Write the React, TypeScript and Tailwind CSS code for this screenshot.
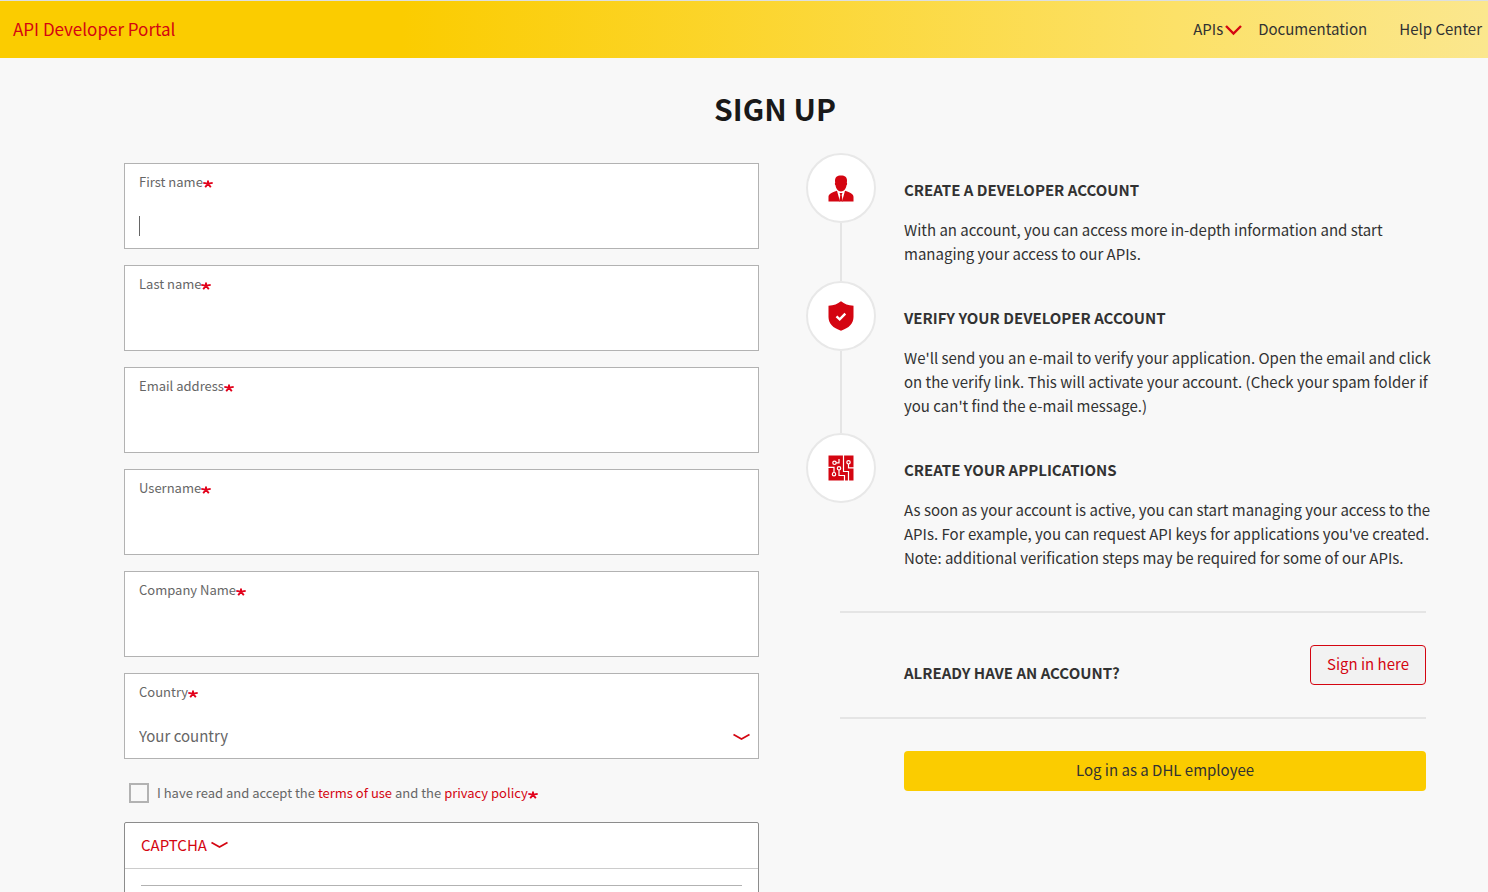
import { useState, ReactNode } from 'react'

interface Field {
  id: string
  label: string
  type?: string
}

const fields: Field[] = [
  { id: 'firstName', label: 'First name' },
  { id: 'lastName', label: 'Last name' },
  { id: 'email', label: 'Email address', type: 'email' },
  { id: 'username', label: 'Username' },
  { id: 'company', label: 'Company Name' },
]

function Required() {
  return (
    <svg className="inline-block w-2.5 h-2 align-[-1px]" viewBox="0 0 10 8" aria-hidden="true">
      <path d="M5 3.6V.5M5 3.6L.3 2.9M5 3.6L9.7 2.9M5 3.6L2.2 7.3M5 3.6L7.8 7.3" stroke="#e2001a" strokeWidth="1.9" fill="none" />
    </svg>
  )
}

function Chevron({ className = '' }: { className?: string }) {
  return (
    <svg className={`w-[17px] h-2 ${className}`} viewBox="0 0 17 8" aria-hidden="true">
      <path d="M.5 1.5L8.5 6L16.5 1.5" stroke="#d40511" strokeWidth="1.7" fill="none" />
    </svg>
  )
}

function PersonIcon() {
  return (
    <svg className="w-[26px] h-[27px]" viewBox="0 0 26 27" aria-hidden="true">
      <g fill="#d40511">
        <path d="M13 .5c4 0 6 1.700 6 5.200 0 .8-.1 1.500-.2 2 .5.3.5 2-.3 2.600-.5 3.400-2.700 6.200-5.500 6.200s-5-2.800-5.500-6.200c-.8-.6-.8-2.300-.3-2.600-.1-.5-.2-1.200-.2-2C7 2.200 9 .5 13 .5z" />
        <path d="M9 15.800L12 26.500H.5v-4.500c0-2.500 2-3.900 8.500-6.200zM17 15.800L14 26.500h11.500v-4.500c0-2.500-2-3.900-8.500-6.200z" />
        <path d="M11.500 18h3l-.8 1.900 1 6.600h-3.400l1-6.600z" />
      </g>
    </svg>
  )
}

function ShieldIcon() {
  return (
    <svg className="w-[26px] h-[30px]" viewBox="0 0 26 30" aria-hidden="true">
      <path d="M13 .3C16.500 3.200 20 4.300 25.500 4.700V16c0 6.500-4.500 11-12.500 13.700C5 27 .5 22.500.5 16V4.700C6 4.300 9.500 3.200 13 .3z" fill="#d40511" />
      <path d="M8.500 15.300l3.200 3 5.600-5.600" stroke="#fff" strokeWidth="2.400" fill="none" />
    </svg>
  )
}

function CircuitIcon() {
  return (
    <svg className="w-[26px] h-[26px]" viewBox="0 0 26 26" aria-hidden="true">
      <path d="M.5.500h25v25H.5z" fill="#d40511" />
      <g stroke="#fff" strokeWidth="1.200" fill="none">
        <circle cx="6.500" cy="7.800" r="1.700" />
        <circle cx="11" cy="13.300" r="1.700" />
        <circle cx="6" cy="19.200" r="1.700" />
        <circle cx="20.500" cy="7.300" r="1.700" />
        <path d="M8.200 7.800h2.800V4M15.500 0v16.500h5V26M20.500 9v3.800H26M0 12.300h6v5.200M11 15v5.500h5.500V26" />
      </g>
    </svg>
  )
}

interface StepProps {
  icon: ReactNode
  title: string
  last?: boolean
  children: ReactNode
}

function Step({ icon, title, last, children }: StepProps) {
  return (
    <li className="flex gap-7">
      <div className="flex flex-col items-center shrink-0">
        <div className="flex items-center justify-center size-[70px] rounded-full border-2 border-[#e8e8e8] bg-white">
          {icon}
        </div>
        {!last && <div className="w-0.5 flex-1 bg-[#e5e5e5]" />}
      </div>
      <div className="pt-[25px] pb-[15px] flex-1 -mr-2">
        <h2 className="font-bold uppercase">{title}</h2>
        <p className="mt-4">{children}</p>
      </div>
    </li>
  )
}

export default function App() {
  const [values, setValues] = useState<Record<string, string>>({})
  const [accepted, setAccepted] = useState(false)

  return (
    <div className="h-screen overflow-y-auto [scrollbar-width:none] bg-[#f8f8f8] font-['Noto_Sans_CJK_SC','Noto_Sans',sans-serif] text-[15px] leading-6 text-[#323232]">
      <header className="flex items-center justify-between h-[58px] pl-[13px] pr-1.5 pb-0.5 border-t border-[#dcdfe0] bg-[linear-gradient(90deg,#fbcc00_0%,#fbcc00_27%,#fce168_79%,#fbe78e_100%)]">
        <a href="#" className="text-[17px] text-[#d40511]">API Developer Portal</a>
        <nav className="flex items-center">
          <button className="flex items-center gap-0.5 mr-4">
            APIs
            <svg className="w-[17px] h-3 mt-0.5" viewBox="0 0 17 12" aria-hidden="true">
              <path d="M1 2l7.500 7.500L16 2" stroke="#d40511" strokeWidth="2.400" fill="none" />
            </svg>
          </button>
          <a href="#docs" className="mr-8">Documentation</a>
          <a href="#help">Help Center</a>
        </nav>
      </header>

      <main className="pl-[124px] pr-[62px] pt-[30px]">
        <h1 className="text-center text-[30px] leading-10 font-bold text-[#191919]">SIGN UP</h1>

        <div className="grid grid-cols-[635fr_620fr] gap-[47px] mt-[25px]">
          <form className="mt-2.5" onSubmit={(e) => e.preventDefault()}>
            <div className="flex flex-col gap-4">
              {fields.map((field, i) => (
                <div key={field.id} className="flex flex-col gap-[22px] border border-[#b2b2b2] bg-white px-3.5 pt-2 pb-2.5">
                  <label htmlFor={field.id} className="text-[13px] leading-5 text-[#666666]">
                    {field.label}
                    <Required />
                  </label>
                  <div className="flex items-center">
                    {i === 0 && <span className="w-px h-5 bg-[#666666]" />}
                    <input
                      id={field.id}
                      type={field.type ?? 'text'}
                      className="h-6 flex-1 min-w-0 outline-none bg-transparent"
                      value={values[field.id] ?? ''}
                      onChange={(e) => setValues({ ...values, [field.id]: e.target.value })}
                    />
                  </div>
                </div>
              ))}
              <div className="relative flex flex-col gap-[22px] border border-[#b2b2b2] bg-white px-3.5 pt-2 pb-2.5">
                <label htmlFor="country" className="text-[13px] leading-5 text-[#666666]">
                  Country
                  <Required />
                </label>
                <select id="country" className="h-6 pb-0.5 w-full appearance-none outline-none bg-transparent text-[#666666]">
                  <option>Your country</option>
                </select>
                <Chevron className="absolute right-2 bottom-[17px] pointer-events-none" />
              </div>
            </div>

            <div className="flex items-center gap-2 mt-6 ml-[5px] text-[13px] leading-5 text-[#666666]">
              <input
                id="terms"
                type="checkbox"
                className="size-5 shrink-0 appearance-none border-2 border-[#b2b2b2] checked:bg-[#d40511]"
                checked={accepted}
                onChange={(e) => setAccepted(e.target.checked)}
              />
              <label htmlFor="terms">
                I have read and accept the <a href="#terms" className="text-[#d40511]">terms of use</a> and the{' '}
                <a href="#privacy" className="text-[#d40511]">privacy policy</a>
                <Required />
              </label>
            </div>

            <div className="mt-[19px] border border-[#8c8c8c] rounded-xs bg-white">
              <button type="button" className="flex items-center gap-1 w-full px-4 pb-0.5 h-[46px] border-b border-[#cccccc] text-[#d40511]">
                CAPTCHA
                <Chevron />
              </button>
              <div className="px-4 pt-4 pb-10">
                <div className="h-20 border-t border-[#b2b2b2]" />
              </div>
            </div>
          </form>

          <section>
            <ol>
              <Step icon={<PersonIcon />} title="Create a developer account">
                With an account, you can access more in-depth information and start managing your access to our APIs.
              </Step>
              <Step icon={<ShieldIcon />} title="Verify your developer account">
                We'll send you an e-mail to verify your application. Open the email and click on the verify link. This will activate your account. (Check your spam folder if you can't find the e-mail message.)
              </Step>
              <Step icon={<CircuitIcon />} title="Create your applications" last>
                As soon as your account is active, you can start managing your access to the APIs. For example, you can request API keys for applications you've created. Note: additional verification steps may be required for some of our APIs.
              </Step>
            </ol>

            <div className="flex items-end justify-between mt-[26px] ml-[34px] pl-16 py-8 border-y-2 border-[#e5e5e5]">
              <h2 className="font-bold uppercase">Already have an account?</h2>
              <button className="h-10 px-4 pb-0.5 rounded-sm border border-[#d40511] bg-[#f2f2f2] text-[#d40511]">Sign in here</button>
            </div>

            <div className="mt-8 ml-[98px]">
              <button className="w-full h-10 pb-0.5 rounded-sm bg-[#fbcc00]">Log in as a DHL employee</button>
            </div>
          </section>
        </div>
      </main>
    </div>
  )
}
